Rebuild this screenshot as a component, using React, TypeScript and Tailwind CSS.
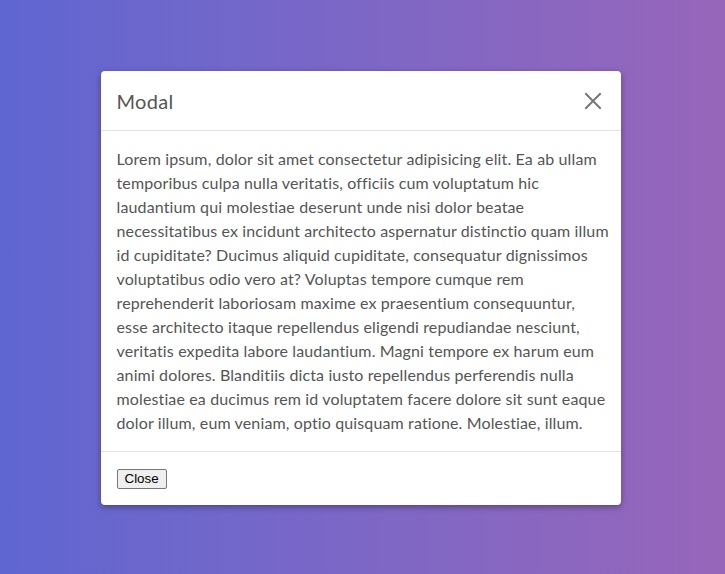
const lines = [
  "Lorem ipsum, dolor sit amet consectetur adipisicing elit. Ea ab ullam",
  "temporibus culpa nulla veritatis, officiis cum voluptatum hic",
  "laudantium qui molestiae deserunt unde nisi dolor beatae",
  "necessitatibus ex incidunt architecto aspernatur distinctio quam illum",
  "id cupiditate? Ducimus aliquid cupiditate, consequatur dignissimos",
  "voluptatibus odio vero at? Voluptas tempore cumque rem",
  "reprehenderit laboriosam maxime ex praesentium consequuntur,",
  "esse architecto itaque repellendus eligendi repudiandae nesciunt,",
  "veritatis expedita labore laudantium. Magni tempore ex harum eum",
  "animi dolores. Blanditiis dicta iusto repellendus perferendis nulla",
  "molestiae ea ducimus rem id voluptatem facere dolore sit sunt eaque",
  "dolor illum, eum veniam, optio quisquam ratione. Molestiae, illum.",
];

export default function App() {
  return (
    <div className="w-full h-[574px] flex items-center justify-center bg-gradient-to-r from-[#5f66d1] to-[#9766ba] font-['Lato','Noto_Sans',sans-serif]">
      <div className="w-[520px] bg-white rounded-[4px] shadow-[0_2px_6px_rgba(0,0,0,0.35)] -translate-x-[2px] translate-y-[1px]">
        {/* header */}
        <div className="h-[60px] flex items-center justify-between px-4 border-b border-[#e2e2e2]">
          <h2 className="text-[20px] text-[#555] tracking-[0.3px]">Modal</h2>
          <button className="w-6 h-6 flex items-center justify-center text-[#777]">
            <svg width="18" height="18" viewBox="0 0 18 18" stroke="currentColor" strokeWidth="2" strokeLinecap="square">
              <path d="M2 2 L16 16 M16 2 L2 16" />
            </svg>
          </button>
        </div>
        {/* body */}
        <div className="p-4 text-[16px] leading-[24px] tracking-[0.13px] text-[#555] border-b border-[#e2e2e2]">
          {lines.map((l, i) => (
            <div key={i} className="whitespace-nowrap">{l}</div>
          ))}
        </div>
        {/* footer */}
        <div className="flex px-4 pt-[17px] pb-4">
          <button className="h-[20px] px-[7px] bg-[#efefef] border border-[#767676] rounded-[2px] text-[13.33px] leading-none text-black font-['Liberation_Sans',Arial,sans-serif]">
            Close
          </button>
        </div>
      </div>
    </div>
  );
}
